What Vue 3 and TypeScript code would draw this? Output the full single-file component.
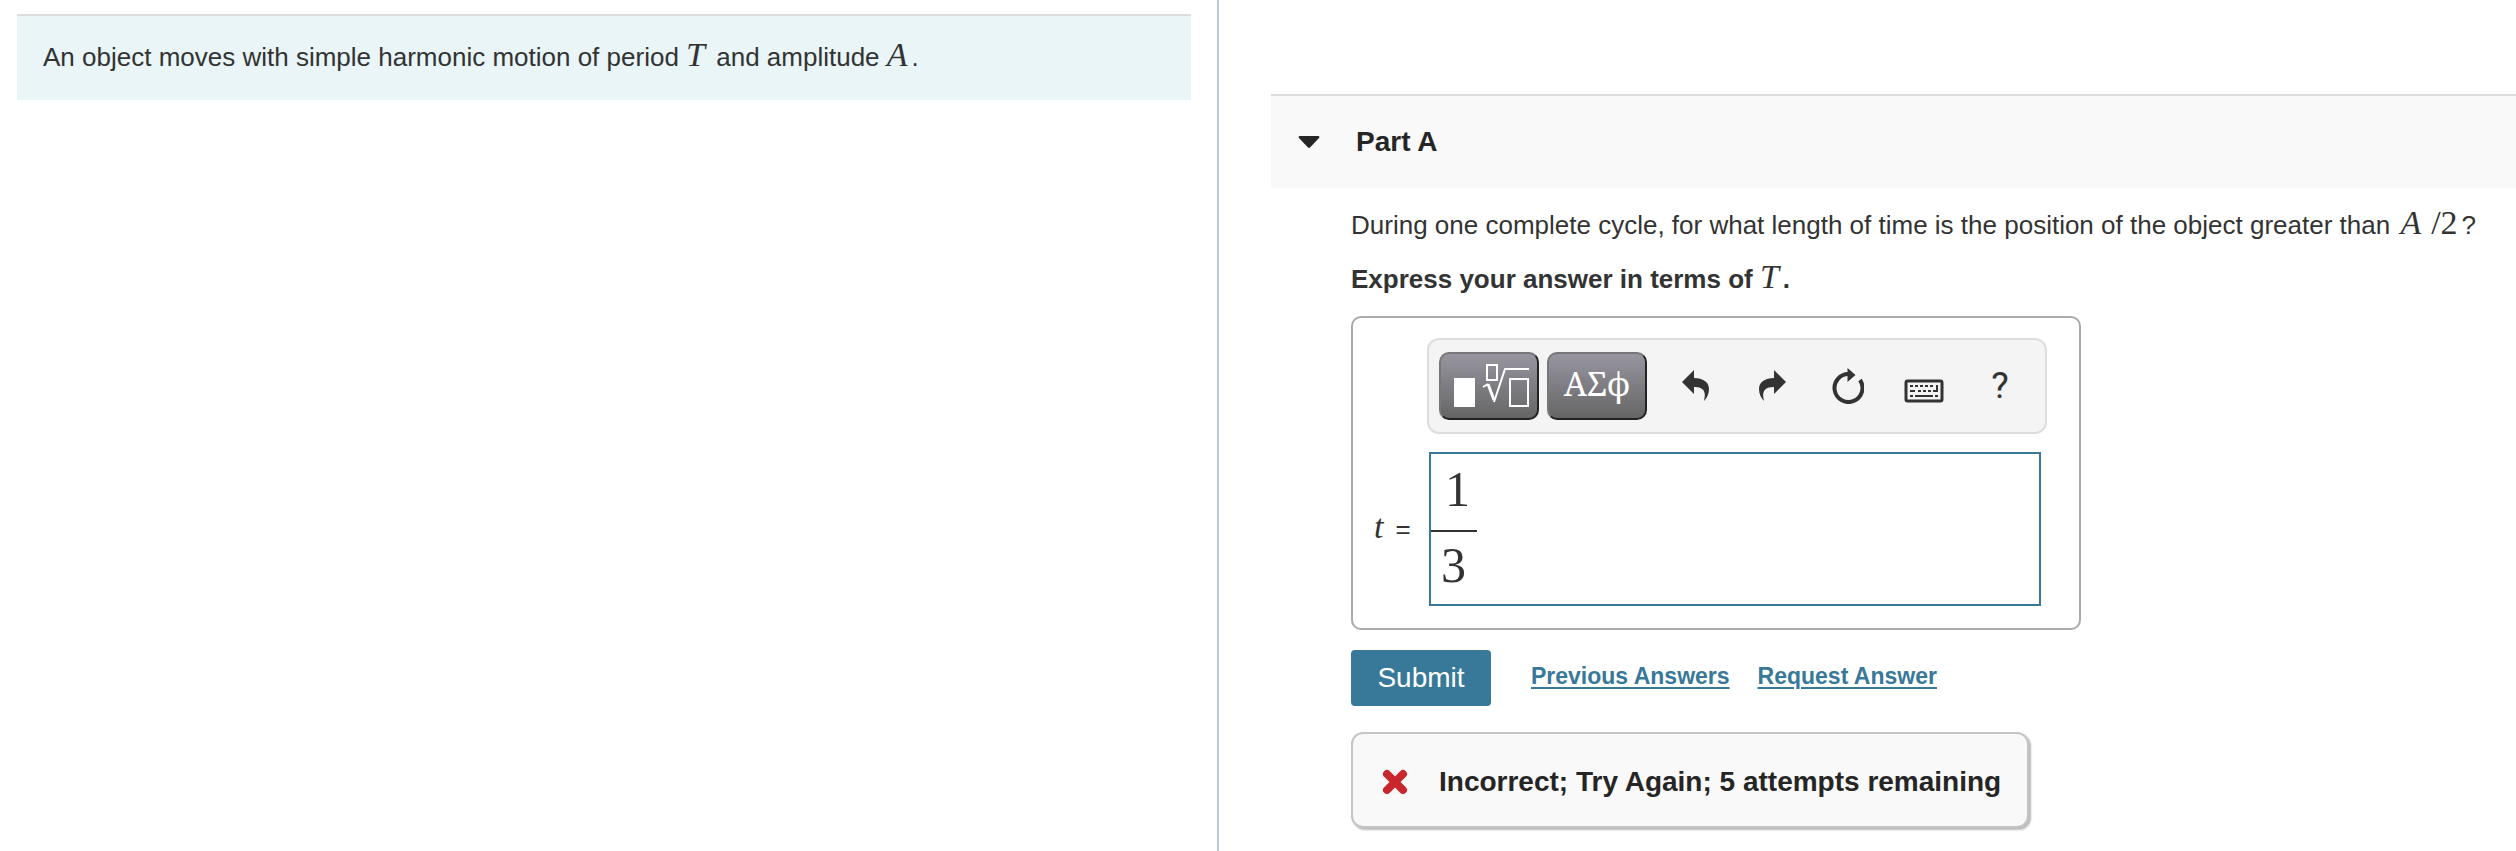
<script setup lang="ts">
import { ref } from 'vue'

const open = ref(true)
const numerator = ref('1')
const denominator = ref('3')
const attempts = ref(5)
</script>

<template>
  <div class="page">
    <aside class="intro">
      <p class="intro-box">
        An object moves with simple harmonic motion of period <i class="math">T</i> and amplitude
        <i class="math">A</i>.
      </p>
    </aside>

    <main class="work">
      <h2 class="part-head">
        <button class="part-toggle" type="button" :aria-expanded="open" @click="open = !open">
          <svg class="caret" viewBox="0 0 22 12" aria-hidden="true">
            <path d="M1.500 0H20.500Q22 1 21 2L12 11.500Q11 12.300 10 11.500L1 2Q0 1 1.500 0Z" fill="#252525" />
          </svg>
          <span>Part A</span>
        </button>
      </h2>

      <section v-if="open" class="part-body">
        <p class="question">
          During one complete cycle, for what length of time is the position of the object greater than
          <span class="ratio"><i class="math">A</i><span class="math num">/2</span></span>?
        </p>
        <p class="instruction">Express your answer in terms of <i class="math">T</i>.</p>

        <form class="answer" @submit.prevent>
          <div class="answer-box">
            <div class="toolbar" role="toolbar" aria-label="Equation tools">
              <button class="key" type="button" aria-label="Templates">
                <svg viewBox="0 0 96 64" width="96" height="64" fill="none" stroke="#fff" stroke-width="2">
                  <path d="M13 24H34V53H13Z" fill="#fff" stroke="none" />
                  <rect x="46" y="11" width="10" height="15" />
                  <path d="M42 33L47 30" />
                  <path d="M47 30L53 46" stroke-width="3" />
                  <path d="M53 48L64 15H88" />
                  <rect x="69" y="25" width="18" height="27" />
                </svg>
              </button>
              <button class="key greek" type="button" aria-label="Greek letters">ΑΣϕ</button>
              <button class="tool" type="button" aria-label="Undo">
                <svg viewBox="0 0 28 32" width="28" height="32" fill="#333">
                  <path d="M0 12L12 0V8C21 8 27 12 27 19C27 24 25 28 22 31C24 23 23 17 12 17V24Z" />
                </svg>
              </button>
              <button class="tool" type="button" aria-label="Redo">
                <svg viewBox="0 0 28 32" width="28" height="32" fill="#333">
                  <path d="M28 12L16 0V8C7 8 1 12 1 19C1 24 3 28 6 31C4 23 5 17 16 17V24Z" />
                </svg>
              </button>
              <button class="tool" type="button" aria-label="Reset">
                <svg viewBox="0 0 32 36" width="32" height="36">
                  <path d="M17 6A14 14 0 1 0 28 12" fill="none" stroke="#333" stroke-width="4" />
                  <path d="M15.500 0L23.500 7L15.500 14Z" fill="#333" />
                </svg>
              </button>
              <button class="tool" type="button" aria-label="Keyboard shortcuts">
                <svg class="keyboard" viewBox="0 0 40 24" width="40" height="24">
                  <rect x="2" y="2" width="36" height="20" rx="1.500" fill="none" stroke="#333" stroke-width="3" />
                  <path
                    d="M6 6h3v2h-3zM11 6h3v2h-3zM16 6h3v2h-3zM21 6h3v2h-3zM26 6h3v2h-3zM32 6h2v7h-5v-2h3zM6 11h5v2h-5zM14 11h3v2h-3zM19 11h3v2h-3zM24 11h3v2h-3zM6 16h3v2h-3zM11 16h18v2h-18zM31 16h3v2h-3z"
                    fill="#333"
                  />
                </svg>
              </button>
              <button class="tool help" type="button" aria-label="Help">?</button>
            </div>

            <span class="variable"><i class="math">t</i> =</span>
            <div class="field" role="group" aria-label="t equals">
              <div class="fraction">
                <input v-model="numerator" class="top" type="text" aria-label="Numerator" />
                <input v-model="denominator" class="bottom" type="text" aria-label="Denominator" />
              </div>
            </div>
          </div>

          <div class="actions">
            <button class="submit" type="submit">Submit</button>
            <a href="#previous">Previous Answers</a>
            <a href="#request">Request Answer</a>
          </div>
        </form>

        <div class="feedback" role="status">
          <svg viewBox="0 0 26 26" width="26" height="26" aria-hidden="true">
            <path d="M5 5L21 21M21 5L5 21" stroke="#c8282d" stroke-width="8" stroke-linecap="round" />
          </svg>
          <span>Incorrect; Try Again; {{ attempts }} attempts remaining</span>
        </div>
      </section>
    </main>
  </div>
</template>

<style>
body {
  margin: 0;
  background: #fff;
}
</style>

<style scoped>
.page {
  display: grid;
  grid-template-columns: 1219fr 1297fr;
  min-height: 100vh;
  box-sizing: border-box;
  font-family: 'Liberation Sans', Arial, sans-serif;
  font-size: 26px;
  line-height: 32px;
  color: #333;
}

p,
h2 {
  margin: 0;
}

.intro {
  padding: 14px 26px 0 17px;
  border-right: 2px solid #bccbdc;
}

.intro-box {
  padding: 25px 26px 27px;
  border-top: 2px solid #ddd;
  background: #e9f5f7;
}

.math {
  margin-right: 4px;
  font-family: 'Liberation Serif', 'Times New Roman', serif;
  font-size: 34px;
  font-weight: 400;
  line-height: 0;
}

.work {
  min-width: 0;
  padding: 94px 0 0 52px;
}

.part-head {
  border-top: 2px solid #ddd;
  background: #f9f9f9;
}

.part-toggle {
  display: flex;
  align-items: center;
  gap: 36px;
  width: 100%;
  height: 92px;
  padding: 0 27px;
  border: 0;
  background: none;
  font: bold 28px/32px 'Liberation Sans', Arial, sans-serif;
  color: #252525;
}

.caret {
  width: 22px;
  height: 12px;
}

.part-body {
  padding: 21px 0 20px 80px;
}

.question {
  white-space: nowrap;
}

.ratio {
  display: inline-flex;
  gap: 6px;
  margin-left: 3px;
}

.instruction {
  margin-top: 22px;
  font-weight: 700;
}

.answer-box {
  display: grid;
  grid-template-columns: 76px 1fr;
  align-items: center;
  row-gap: 18px;
  box-sizing: border-box;
  width: 730px;
  margin-top: 21px;
  padding: 20px 32px 22px 0;
  border: 2px solid #aaa;
  border-radius: 10px;
}

.toolbar {
  grid-column: 2;
  display: flex;
  align-items: center;
  gap: 8px;
  box-sizing: border-box;
  height: 96px;
  margin: 0 0 0 -2px;
  padding: 0 10px;
  border: 2px solid #ddd;
  border-radius: 12px;
  background: #f4f4f4;
}

.key {
  flex: none;
  display: flex;
  align-items: center;
  justify-content: center;
  box-sizing: border-box;
  width: 100px;
  height: 68px;
  padding: 0;
  border: 2px solid;
  border-color: #777 #222 #222 #777;
  border-radius: 10px;
  background: linear-gradient(#9895a0, #656565);
  color: #fff;
}

.greek {
  padding-bottom: 4px;
  font: 33px/32px 'Noto Serif', 'Liberation Serif', serif;
}

.tool {
  flex: none;
  display: flex;
  align-items: center;
  justify-content: center;
  width: 68px;
  height: 68px;
  padding: 0;
  border: 0;
  background: none;
}

.greek + .tool {
  margin-left: 7px;
}

.keyboard {
  margin-top: 10px;
}

.help {
  font: 37px/40px Roboto, 'Liberation Sans', sans-serif;
  color: #333;
}

.variable {
  display: flex;
  gap: 8px;
  padding-left: 21px;
  font-size: 26px;
  align-items: baseline;
}

.field {
  display: flex;
  align-items: center;
  box-sizing: border-box;
  height: 154px;
  margin-right: 6px;
  border: 2px solid #387898;
}

.fraction {
  width: 46px;
}

.fraction input {
  display: block;
  box-sizing: border-box;
  width: 46px;
  height: 72px;
  padding: 0 0 6px 10px;
  border: 0;
  outline: 0;
  background: none;
  font: 50px/58px 'Liberation Serif', 'Times New Roman', serif;
  color: #333;
}

.fraction .top {
  height: 78px;
  padding: 0 0 6px 14px;
  border-bottom: 2px solid #333;
}

.actions {
  display: flex;
  align-items: center;
  gap: 28px;
  margin-top: 20px;
}

.submit {
  width: 140px;
  height: 56px;
  margin-right: 12px;
  padding: 0;
  border: 0;
  border-radius: 4px;
  background: #387898;
  font: 28px/32px 'Liberation Sans', Arial, sans-serif;
  color: #fff;
}

.actions a {
  padding-bottom: 4px;
  font-size: 23px;
  font-weight: 700;
  line-height: 28px;
  color: #387898;
  text-decoration-thickness: 2px;
  text-underline-offset: 3px;
}

.feedback {
  display: inline-flex;
  align-items: center;
  gap: 31px;
  box-sizing: border-box;
  height: 96px;
  margin-top: 26px;
  padding: 4px 26px 0 29px;
  border: 2px solid #c4c4c4;
  border-radius: 12px;
  background: #f9f9f9;
  box-shadow: 2px 2px 2px #bbb;
  font-size: 28px;
  font-weight: 700;
  color: #252525;
}
</style>
